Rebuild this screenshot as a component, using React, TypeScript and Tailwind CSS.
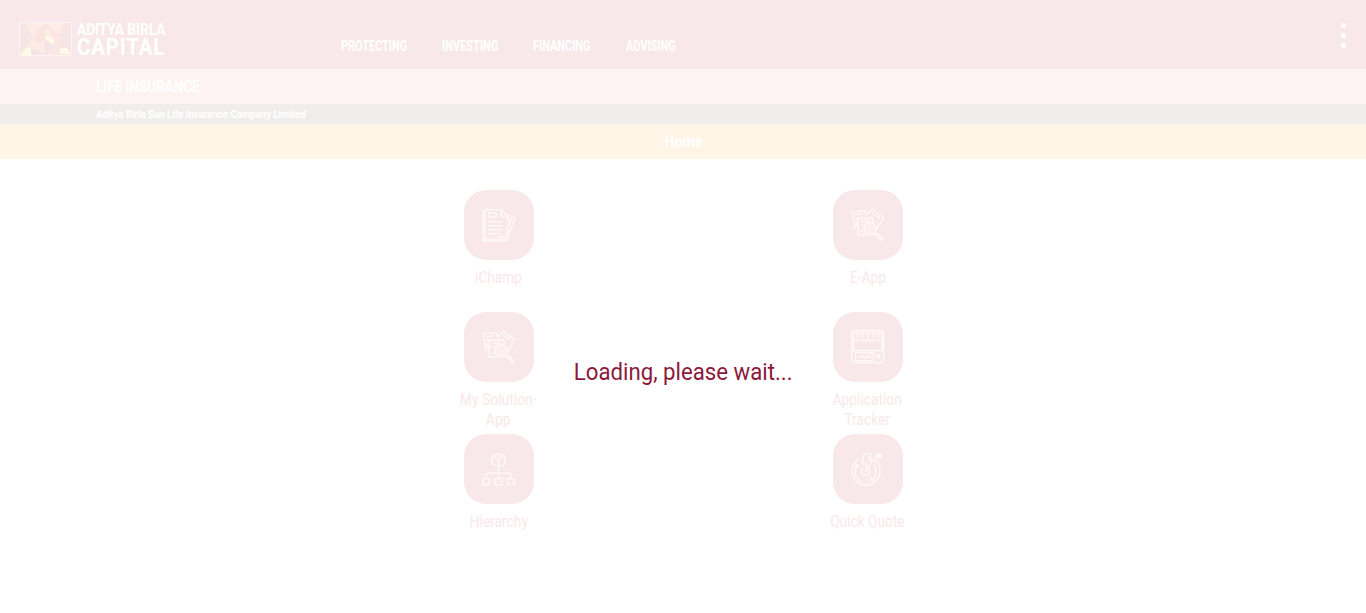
import React from 'react';

const nav = [
  { label: 'PROTECTING', box: 'w-[66px] mr-[35px]', fit: 'scale-x-[0.78]' },
  { label: 'INVESTING', box: 'w-[56px] mr-[35px]', fit: 'scale-x-[0.785]' },
  { label: 'FINANCING', box: 'w-[58px] mr-[35px]', fit: 'scale-x-[0.78]' },
  { label: 'ADVISING', box: 'w-[50px]', fit: 'scale-x-[0.78]' },
];

function Logo() {
  return (
    <svg width="53" height="34" viewBox="0 0 53 34">
      <rect width="53" height="34" fill="#f8e6e4" />
      <path d="M1 1L14 19L1 30Z" fill="#f5e5e6" />
      <path d="M52 1L40 17L52 30Z" fill="#f5e5e6" />
      <path d="M7 1H26L14 17Z" fill="#fdebe6" />
      <path d="M26 1H45L38 17Z" fill="#fdede6" />
      <path d="M26 1L14 17L24 27L26 18Z" fill="#fae4e2" />
      <path d="M26 4L36 18H26Z" fill="#fdeee4" />
      <path d="M26 1L43 15L36 22Z" fill="#fbe6e3" />
      <path d="M1 32L14 17L20 24L14 33Z" fill="#fcece4" />
      <path d="M2 33L7 26H12V33Z" fill="#fffae8" />
      <path d="M12 26L24 33H12Z" fill="#f5e5e5" />
      <path d="M26 18Q34 18 35 26L26 33Z" fill="#f5e4e5" />
      <path d="M25 18L26 33L16 25Z" fill="#fcece5" />
      <path d="M26 18V14Q32 13 36 19L33 23Q30 18 26 18Z" fill="#fffae8" />
      <path d="M41 26H48L52 32H41Z" fill="#fffae8" />
      <path d="M27 33L35 26L41 33Z" fill="#fce8e3" />
      <rect x=".5" y=".5" width="52" height="33" fill="none" stroke="#fcf4f2" />
    </svg>
  );
}

function Form() {
  return (
    <>
      <path d="M3 1.5H19L26 8V14M26 24V31H3V1.5M19 1.5V8H26M3 3H1V33H24V31" />
      <path d="M7 4.5H14V9H7ZM6 13.5H21M6 17.5H21M6 21.5H20M6 25.5H20M16 28.5H24" />
      <path d="M30 8L33 9.5L28 24L25 27V22ZM25 22L28 24" />
    </>
  );
}

function Papers() {
  return (
    <>
      <path d="M5 20L4 20L1 4L14 2.5L15 7M4 7L12 5.5M4 10H7M4 14H6M5 17H7" />
      <path d="M16 7L21 1L33 10L25 22M21 5L29 10.5" />
      <path d="M15 27H7V10H22V14M10 13H19M10 17H12M10 23H12" />
      <circle cx="19" cy="20.5" r="6" />
      <circle cx="19" cy="20.5" r="3.7" strokeWidth="0.8" />
      <path d="M20.3 19H18.3L18 20.5H20V22H17.8" strokeWidth="0.8" />
      <path d="M23 25L25 27M25 27L26.5 25.5L31.5 31L30 32.5Z" />
    </>
  );
}

function Tracker() {
  return (
    <>
      <rect x=".7" y=".7" width="32" height="32" rx="3" />
      <path d="M2.5 10V5Q2.5 3 5 3H28.5Q31 3 31 5V20.5H2.5V10H31M7 4V8M12 4V8M17 4V8M22 4V8M27 4V8" />
      <path d="M4.5 22.5H22.5V30.5H4.5ZM7.5 28L10.5 26L13.5 28L16.5 26L20 28" />
      <circle cx="27" cy="26.5" r="1.6" />
    </>
  );
}

function Hierarchy() {
  return (
    <g transform="translate(0 1.5)">
      <path d="M16.5 .3L23 2.5V11L16.5 13L10 11V2.5ZM10 2.5L16.5 5L23 2.5M16.5 5V25M4 25V22Q4 19.5 7 19.5H26Q29 19.5 29 22V25" />
      <path d="M.8 25H7.5V31H.8ZM13 25H20V31H13ZM25.5 25H32V31H25.5Z" />
    </g>
  );
}

function Quote() {
  return (
    <g transform="translate(0 1)">
      <path d="M8 6A14 14 0 1 0 23 6.5M6.5 12A10.5 10.5 0 0 0 11 28.5M23 12A10.5 10.5 0 0 1 22 26M4 14L6 11.5L8.5 13.5M20 23.5V27.5L24 26.5" />
      <path d="M13 .5H20L18 7H22L15 18L16 11H11Z" />
      <path d="M12.5 15A4 4 0 1 0 18 16.5" />
      <path d="M25 1L28 3L25 5ZM28 1L31.5 3L28 5Z" fill="#fffafa" />
    </g>
  );
}

const tiles = [
  { lines: ['iChamp'], Icon: Form, fit: 'scale-x-[0.85]' },
  { lines: ['E-App'], Icon: Papers, fit: 'scale-x-[0.86]' },
  { lines: ['My Solution-', 'App'], Icon: Papers, fit: 'scale-x-[0.87]' },
  { lines: ['Application', 'Tracker'], Icon: Tracker, fit: 'scale-x-[0.86]' },
  { lines: ['Hierarchy'], Icon: Hierarchy, fit: 'scale-x-[0.86]' },
  { lines: ['Quick Quote'], Icon: Quote, fit: 'scale-x-[0.85]' },
];

export default function App() {
  return (
    <div className="relative h-[613px] w-full overflow-hidden bg-white font-[Roboto,sans-serif]">
      <header className="flex h-[69px] items-start bg-[#f9e8e9] text-white">
        <div className="flex w-[341px] items-start pt-[22px] pl-[19px]">
          <Logo />
          <div className="ml-[5px] w-[90px] font-bold whitespace-nowrap">
            <div className="h-[15px] w-max origin-left scale-x-[0.8] text-[17px] leading-[14px]">ADITYA BIRLA</div>
            <div className="w-max origin-left scale-x-[0.85] text-[24px] leading-[20px] tracking-[1px]">CAPITAL</div>
          </div>
        </div>
        <nav className="flex pt-[36px] text-[14px] leading-5 font-bold whitespace-nowrap">
          {nav.map((n) => (
            <a key={n.label} className={n.box}>
              <span className={`inline-block origin-left ${n.fit}`}>{n.label}</span>
            </a>
          ))}
        </nav>
        <div className="mt-[23px] mr-[20px] ml-auto flex flex-col gap-[5px]">
          <i className="size-[5px] rounded-full bg-white" />
          <i className="size-[5px] rounded-full bg-white" />
          <i className="size-[5px] rounded-full bg-white" />
        </div>
      </header>
      <div className="h-[35px] bg-[#fdf3f2] pl-[96px] text-[16px] leading-[36px] font-bold text-white">
        <span className="inline-block origin-left scale-x-[0.84]">LIFE INSURANCE</span>
      </div>
      <div className="h-[20px] bg-[#efeeec] pl-[96px] text-[11px] leading-[21px] font-bold text-white">
        <span className="inline-block origin-left scale-x-[0.87]">Aditya Birla Sun Life Insurance Company Limited</span>
      </div>
      <div className="h-[35px] bg-[#fff5e6] text-center text-[16px] leading-[36px] font-bold text-white">
        <span className="inline-block scale-x-[0.88]">Home</span>
      </div>
      <main className="mx-auto mt-[31px] grid w-[738px] auto-rows-[122px] grid-cols-2">
        {tiles.map(({ lines, Icon, fit }) => (
          <div key={lines[0]} className="flex flex-col items-center">
            <div className="flex size-[70px] items-center justify-center rounded-[22px] bg-[#f9e8e9]">
              <svg width="34" height="34" viewBox="0 0 34 34" fill="none" stroke="#fffafa" strokeWidth="1.25" strokeLinejoin="round">
                <Icon />
              </svg>
            </div>
            <div className="mt-[8px] text-center text-[16px] leading-[20px] whitespace-nowrap text-[#f9e8e9]">
              {lines.map((l) => (
                <div key={l} className={fit}>{l}</div>
              ))}
            </div>
          </div>
        ))}
      </main>
      <div className="absolute inset-x-0 top-[356px] text-center text-[24px] leading-[32px] text-[#8b1a3c]">
        <span className="inline-block scale-x-[0.925] whitespace-nowrap">Loading, please wait...</span>
      </div>
    </div>
  );
}
